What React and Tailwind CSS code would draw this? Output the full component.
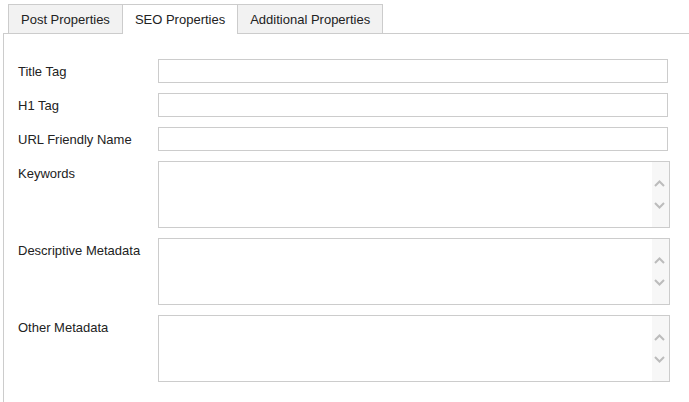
export default function App() {
  const Chevron = ({ up }) => (
    <svg width="11" height="7" viewBox="0 0 11 7" className="block">
      <path
        d={up ? "M1 6 L5.5 1.5 L10 6" : "M1 1 L5.5 5.5 L10 1"}
        fill="none"
        stroke="#bcbcbc"
        strokeWidth="2"
      />
    </svg>
  );

  const InputRow = ({ label }) => (
    <div className="flex items-center h-[24px]">
      <div className="w-[140px] shrink-0 pt-[2px]">{label}</div>
      <div className="w-[510px] h-[24px] border border-[#cccccc] bg-white" />
    </div>
  );

  const AreaRow = ({ label }) => (
    <div className="flex items-start">
      <div className="w-[140px] shrink-0 h-[24px] pt-[2px] flex items-center">{label}</div>
      <div className="w-[512px] h-[67px] border border-[#cccccc] bg-white flex justify-end">
        <div className="w-[17px] h-full bg-[#f7f7f7] flex flex-col items-center pt-[18px] gap-[15px] pr-[3px]">
          <Chevron up />
          <Chevron />
        </div>
      </div>
    </div>
  );

  return (
    <div className="w-[689px] h-[402px] bg-white overflow-hidden font-['Liberation_Sans',Arial,sans-serif] text-[13px] text-[#222222]">
      <div className="flex items-start pl-[8px] pt-[4px] h-[33px]">
        <div className="h-[29px] flex items-center pt-[1px] px-[12px] border border-b-0 border-[#cccccc] bg-[#f2f2f2]">
          Post Properties
        </div>
        <div className="relative z-10 -ml-px h-[30px] flex items-center px-[12px] border border-b-0 border-[#cccccc] bg-white">
          SEO Properties
        </div>
        <div className="-ml-px h-[29px] flex items-center pt-[1px] px-[12px] border border-b-0 border-[#cccccc] bg-[#f2f2f2]">
          Additional Properties
        </div>
      </div>
      <div className="ml-[3px] h-[369px] border-l border-t border-[#cccccc] pl-[14px] pt-[25px] flex flex-col gap-[10px]">
        <InputRow label="Title Tag" />
        <InputRow label="H1 Tag" />
        <InputRow label="URL Friendly Name" />
        <AreaRow label="Keywords" />
        <AreaRow label="Descriptive Metadata" />
        <AreaRow label="Other Metadata" />
      </div>
    </div>
  );
}
